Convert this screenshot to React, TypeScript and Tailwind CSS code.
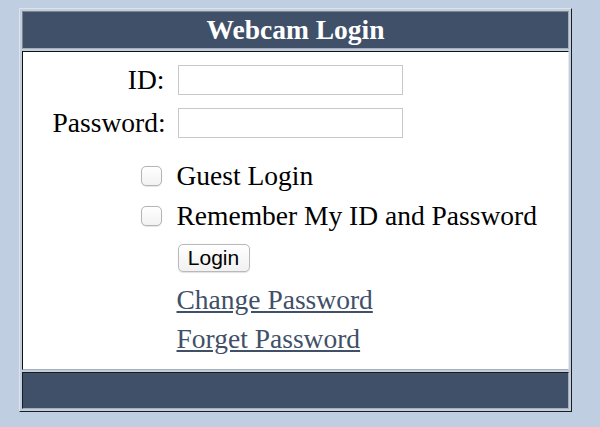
export default function App() {
  const serif = { fontFamily: '"Liberation Serif", "Times New Roman", serif' };
  return (
    <div className="w-[600px] h-[427px] bg-[#c0cee1] pt-[8px] pl-[19px]" style={serif}>
      <div className="w-[553px] border border-t-[#dfe3e8] border-l-[#dfe3e8] border-b-[#1c1c1c] border-r-[#1c1c1c] p-[2px] flex flex-col gap-[2px]">
        <div className="h-[38px] bg-[#3f5068] border border-t-[#7d838b] border-l-[#7d838b] border-b-[#a9aeb4] border-r-[#a9aeb4] flex items-center justify-center">
          <span className="text-white font-bold text-[27.5px] leading-[30px]">Webcam Login</span>
        </div>
        <div className="h-[319px] bg-white border border-t-[#111] border-l-[#111] border-b-[#a9aeb4] border-r-[#e8eaed] flex justify-center text-black text-[27.5px] leading-[30px]">
          <div className="flex flex-col pt-[13px]">
            <div className="flex items-center h-[30px]">
              <div className="w-[112px] text-right">ID:</div>
              <div className="ml-[13px]">
                <input className="w-[225px] h-[30px] border border-[#c8c8c8] bg-white outline-none" />
              </div>
            </div>
            <div className="flex items-center h-[30px] mt-[13px]">
              <div className="w-[112px] text-right">Password:</div>
              <div className="ml-[13px]">
                <input type="password" className="w-[225px] h-[30px] border border-[#c8c8c8] bg-white outline-none" />
              </div>
            </div>
            <div className="flex items-center h-[30px] mt-[23px]">
              <div className="w-[112px] flex justify-end">
                <div className="w-[21px] h-[20px] mr-[3px] rounded-[5px] border border-[#b4b4b4] bg-gradient-to-b from-white to-[#f2f2f2] shadow-[0_0.5px_1px_rgba(0,0,0,0.1)]" />
              </div>
              <div className="ml-[12px] w-[362px] whitespace-nowrap">Guest Login</div>
            </div>
            <div className="flex items-center h-[30px] mt-[10px]">
              <div className="w-[112px] flex justify-end">
                <div className="w-[21px] h-[20px] mr-[3px] rounded-[5px] border border-[#b4b4b4] bg-gradient-to-b from-white to-[#f2f2f2] shadow-[0_0.5px_1px_rgba(0,0,0,0.1)]" />
              </div>
              <div className="ml-[12px] w-[362px] whitespace-nowrap">Remember My ID and Password</div>
            </div>
            <div className="flex items-center h-[28px] mt-[13px]">
              <div className="w-[112px]" />
              <div className="ml-[13px]">
                <button
                  className="w-[72px] h-[28px] rounded-[5px] border border-[#b9b9b9] bg-gradient-to-b from-white to-[#f1f1f1] text-[21px] leading-[26px] text-black flex items-center justify-center shadow-[0_0.5px_1px_rgba(0,0,0,0.12)]"
                  style={{ fontFamily: '"Liberation Sans", Arial, sans-serif' }}
                >
                  Login
                </button>
              </div>
            </div>
            <div className="flex items-center h-[30px] mt-[13px]">
              <div className="w-[112px]" />
              <a href="#" className="ml-[12px] text-[#3f5068] underline whitespace-nowrap">Change Password</a>
            </div>
            <div className="flex items-center h-[30px] mt-[9px]">
              <div className="w-[112px]" />
              <a href="#" className="ml-[12px] text-[#3f5068] underline whitespace-nowrap">Forget Password</a>
            </div>
          </div>
        </div>
        <div className="h-[37px] bg-[#3f5068] border border-t-[#1c1c1c] border-l-[#1c1c1c] border-b-[#a9aeb4] border-r-[#a9aeb4]" />
      </div>
    </div>
  );
}
